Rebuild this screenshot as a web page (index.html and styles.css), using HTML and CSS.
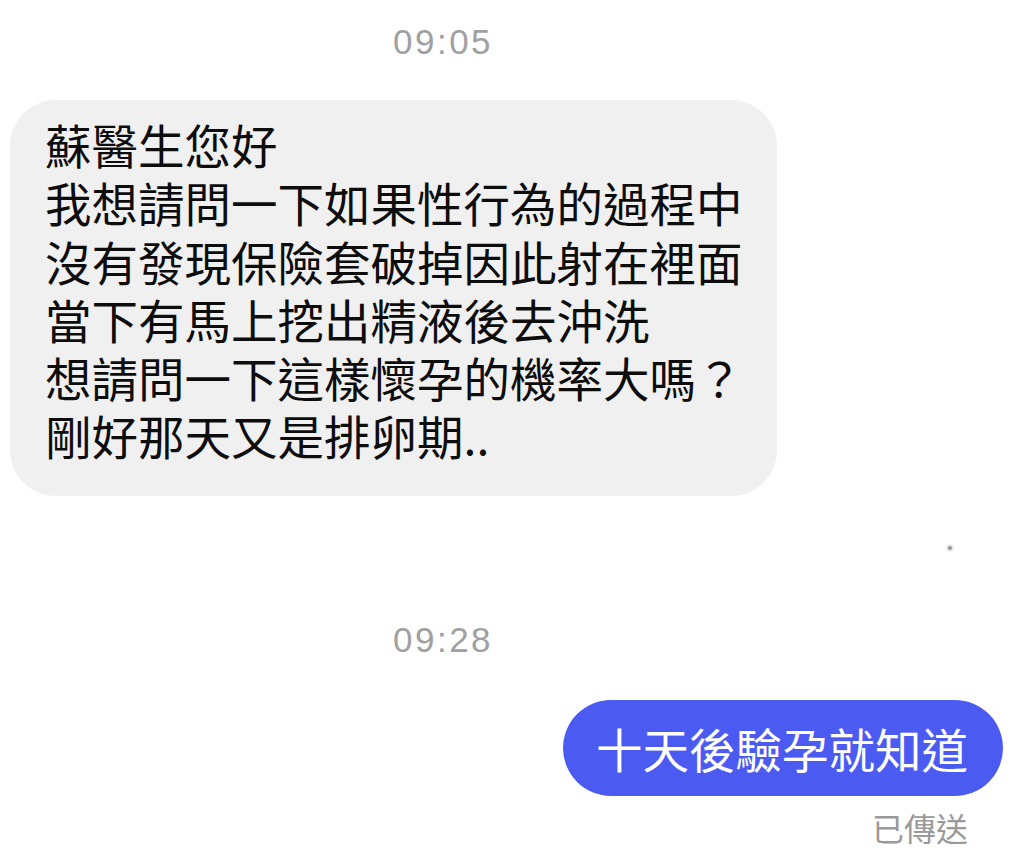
FILE: index.html
```html
<!DOCTYPE html>
<html lang="zh-Hant">
<head>
	<meta charset="utf-8">
	<title>訊息</title>
	<link rel="stylesheet" href="styles.css">
</head>
<body>

<div class="chat">
	<div class="time time-first">09:05</div>

	<div class="bubble bubble-in">
		<div class="line">蘇醫生您好</div>
		<div class="line">我想請問一下如果性行為的過程中</div>
		<div class="line">沒有發現保險套破掉因此射在裡面</div>
		<div class="line">當下有馬上挖出精液後去沖洗</div>
		<div class="line">想請問一下這樣懷孕的機率大嗎？</div>
		<div class="line">剛好那天又是排卵期..</div>
	</div>

	<div class="speck"></div>

	<div class="time time-second">09:28</div>

	<div class="bubble bubble-out">
		<div class="line">十天後驗孕就知道</div>
	</div>

	<div class="status">已傳送</div>
</div>

</body>
</html>
```

FILE: styles.css
```css
* {
	box-sizing: border-box;
}

body {
	margin: 0;
	background: #ffffff;
	font-family: "Noto Sans CJK TC", "Noto Sans CJK SC", sans-serif;
}

.chat {
	display: flex;
	flex-direction: column;
	width: 1024px;
	height: 861px;
	overflow: hidden;
}

.time {
	align-self: flex-start;
	margin-left: 393px;
	font-family: "Liberation Sans", Arial, sans-serif;
	font-size: 35px;
	line-height: 36px;
	letter-spacing: 2.5px;
	color: #a0a0a0;
}

.time-first {
	margin-top: 24px;
}

.time-second {
	margin-top: 72px;
}

.bubble {
	font-size: 46.5px;
	white-space: nowrap;
}

.line {
	height: 58.3px;
	line-height: 58.3px;
}

.bubble-in {
	align-self: flex-start;
	margin: 40px 0 0 10px;
	padding: 15px 34px 31px 35px;
	background: #f0f0f0;
	color: #0d0d0d;
	border-radius: 46px;
}

.bubble-out {
	align-self: flex-end;
	margin: 42px 21px 0 0;
	padding: 19px 35px 19px 33px;
	background: #4b5bf2;
	color: #ffffff;
	border-radius: 48px;
}

.speck {
	align-self: flex-end;
	width: 4px;
	height: 4px;
	margin: 50px 72px 0 0;
	border-radius: 50%;
	background: #9a9a9a;
	box-shadow: 0 0 3px 1px #d0d0d0;
}

.status {
	align-self: flex-end;
	margin: 13px 56px 0 0;
	font-size: 32px;
	line-height: 36px;
	color: #9a9a9a;
}
```
